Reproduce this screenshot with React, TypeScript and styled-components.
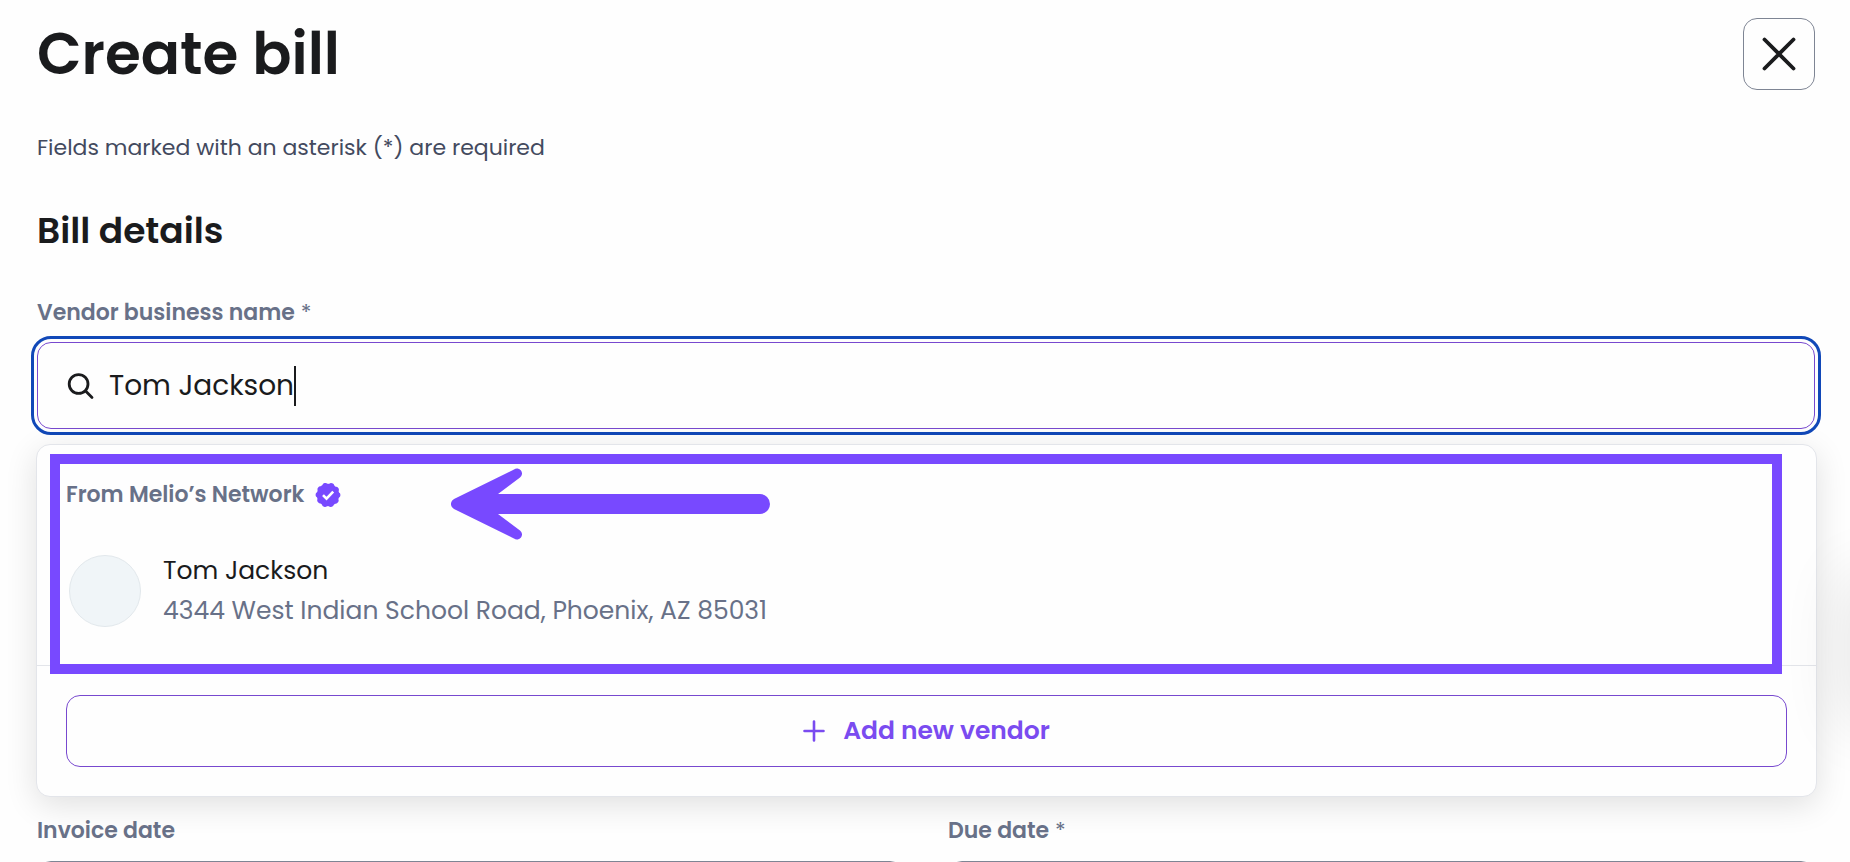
import React, { useState } from 'react';
import styled, { createGlobalStyle } from 'styled-components';

const GlobalStyle = createGlobalStyle`
  *, *::before, *::after { box-sizing: border-box; }
  body {
    margin: 0;
    background: #fefefe;
    color: #1a1b1d;
    font-family: Poppins, Inter, "Liberation Sans", sans-serif;
  }
  button, input { font: inherit; color: inherit; }
  h1, h2, h3, p { margin: 0; }
`;

const Page = styled.main`
  position: relative;
  height: 100vh;
  overflow: hidden;
  padding: 18px 35px 0 37px;
`;

const Header = styled.header`
  display: flex;
  justify-content: space-between;
  align-items: center;
  height: 72px;
`;

const Title = styled.h1`
  font-size: 58px;
  line-height: 72px;
  font-weight: 600;
`;

const CloseButton = styled.button`
  display: grid;
  place-items: center;
  width: 72px;
  height: 72px;
  padding: 0;
  border: 1px solid #7e8594;
  border-radius: 14px;
  background: #fefefe;
`;

const Hint = styled.p`
  margin-top: 40px;
  font-size: 22px;
  line-height: 36px;
  color: #434a5e;
`;

const SectionTitle = styled.h2`
  margin-top: 40px;
  font-size: 36px;
  line-height: 50px;
  font-weight: 600;
`;

const FieldLabel = styled.label`
  display: block;
  font-size: 22px;
  line-height: 36px;
  font-weight: 600;
  color: #687188;
`;

const Required = styled.span`
  margin-left: 6px;
  font-weight: 400;
`;

const VendorField = styled.div`
  margin-top: 39px;
`;

const SearchBox = styled.div`
  display: flex;
  align-items: center;
  height: 87px;
  margin-top: 11px;
  padding: 0 29px;
  border: 1px solid #7849cf;
  border-radius: 14px;
  outline: 3px solid #1148b8;
  outline-offset: 3px;
`;

const SearchInput = styled.input`
  field-sizing: content;
  margin-left: 14px;
  padding: 0;
  border: 0;
  outline: 0;
  background: transparent;
  caret-color: transparent;
  font-size: 28px;
  line-height: 40px;
`;

const Caret = styled.span`
  width: 2px;
  height: 40px;
  background: #1a1b1d;
`;

const Menu = styled.section`
  position: relative;
  margin: 15px -2px 0 -1px;
  border: 1px solid #e3e5ea;
  border-radius: 14px;
  background: #fefefe;
  box-shadow: 0 8px 32px rgba(0, 0, 0, 0.12);
`;

const Highlight = styled.div`
  position: absolute;
  inset: 9px 34px 122px 13px;
  border: 10px solid #7849ff;
  pointer-events: none;
`;

const Arrow = styled.svg`
  position: absolute;
  top: 23px;
  left: 414px;
`;

const MenuGroup = styled.div`
  padding: 32px 29px 34px;
  border-bottom: 1px solid #e3e5ea;
`;

const GroupTitle = styled.h3`
  display: flex;
  align-items: center;
  gap: 11px;
  font-size: 22px;
  line-height: 36px;
  font-weight: 600;
  color: #687188;
`;

const VendorOption = styled.button`
  display: flex;
  align-items: center;
  gap: 22px;
  width: 100%;
  margin-top: 38px;
  padding: 0 3px;
  border: 0;
  background: transparent;
  text-align: left;
`;

const Avatar = styled.span`
  width: 72px;
  height: 72px;
  border: 1px solid #e2e8ec;
  border-radius: 50%;
  background: #f0f5f8;
`;

const VendorText = styled.span`
  display: grid;
  font-size: 25px;
  line-height: 40px;
`;

const Address = styled.span`
  color: #687188;
`;

const MenuFooter = styled.div`
  padding: 29px;
`;

const AddButton = styled.button`
  display: flex;
  align-items: center;
  justify-content: center;
  gap: 18px;
  width: 100%;
  height: 72px;
  padding: 0;
  border: 1px solid #7849cf;
  border-radius: 14px;
  background: #fefefe;
  color: #7a4bf0;
  font-size: 25px;
  font-weight: 600;
`;

const DateRow = styled.div`
  position: relative;
  display: grid;
  grid-template-columns: 1fr 1fr;
  gap: 44px;
  margin-top: 16px;
`;

const DateInput = styled.input`
  width: 100%;
  height: 87px;
  margin-top: 12px;
  padding: 0 29px;
  border: 1px solid #7e8594;
  border-radius: 14px;
  background: #fefefe;
`;

const EdgeShadow = styled.div`
  position: absolute;
  top: 580px;
  left: 100%;
  width: 60px;
  height: 140px;
  box-shadow: 0 0 64px 4px rgba(0, 0, 0, 0.11);
  pointer-events: none;
`;

export default function App() {
  const [vendor, setVendor] = useState('Tom Jackson');
  return (
    <>
      <GlobalStyle />
      <Page>
        <Header>
          <Title>Create bill</Title>
          <CloseButton type="button" aria-label="Close">
            <svg width="34" height="34" viewBox="0 0 34 34" fill="none" stroke="#1a1b1d" strokeWidth="3.8" strokeLinecap="round">
              <path d="M2.5 2.5l29 29M31.5 2.5l-29 29" />
            </svg>
          </CloseButton>
        </Header>
        <Hint>Fields marked with an asterisk (*) are required</Hint>
        <SectionTitle>Bill details</SectionTitle>
        <VendorField>
          <FieldLabel htmlFor="vendor">
            Vendor business name<Required>*</Required>
          </FieldLabel>
          <SearchBox>
            <svg width="28" height="28" viewBox="0 0 28 28" fill="none" stroke="#1a1b1d" strokeWidth="2.8" strokeLinecap="round">
              <circle cx="11.6" cy="12" r="9.4" />
              <path d="M18.6 19l6.4 6.4" />
            </svg>
            <SearchInput id="vendor" value={vendor} onChange={(e) => setVendor(e.target.value)} />
            <Caret />
          </SearchBox>
        </VendorField>
        <Menu>
          <MenuGroup>
            <GroupTitle>
              From Melio’s Network
              <svg width="26" height="26" viewBox="0 0 26 26">
                <circle cx="13" cy="13" r="11.2" fill="#7849ff" />
                <circle cx="13" cy="13" r="9.6" fill="none" stroke="#7849ff" strokeWidth="5.6" strokeLinecap="round" strokeDasharray="0.01 6.022" />
                <path d="M8 13.200l3.500 3.500 6.700-7" fill="none" stroke="#fff" strokeWidth="2.6" />
              </svg>
            </GroupTitle>
            <VendorOption type="button">
              <Avatar />
              <VendorText>
                <span>Tom Jackson</span>
                <Address>4344 West Indian School Road, Phoenix, AZ 85031</Address>
              </VendorText>
            </VendorOption>
          </MenuGroup>
          <MenuFooter>
            <AddButton type="button">
              <svg width="22" height="22" viewBox="0 0 22 22" fill="none" stroke="currentColor" strokeWidth="2.6" strokeLinecap="round">
                <path d="M11 1.5v19M1.5 11h19" />
              </svg>
              Add new vendor
            </AddButton>
          </MenuFooter>
          <Highlight />
          <Arrow width="320" height="72" viewBox="0 0 320 72" fill="#7849ff">
            <path d="M3 31L63 1.5A5 5 0 0 1 69 9.5L47 26H309a10 10 0 0 1 0 20H47L69 62.5A5 5 0 0 1 63 70.500L3 41A5.600 5.600 0 0 1 3 31Z" />
          </Arrow>
        </Menu>
        <DateRow>
          <div>
            <FieldLabel htmlFor="invoice-date">Invoice date</FieldLabel>
            <DateInput id="invoice-date" />
          </div>
          <div>
            <FieldLabel htmlFor="due-date">
              Due date<Required>*</Required>
            </FieldLabel>
            <DateInput id="due-date" />
          </div>
        </DateRow>
        <EdgeShadow />
      </Page>
    </>
  );
}
